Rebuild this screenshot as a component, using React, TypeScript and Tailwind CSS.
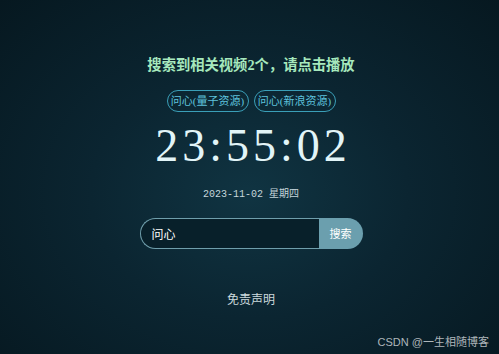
export default function App() {
    return (
        <div className="relative h-[354px] w-[499px] overflow-hidden bg-[radial-gradient(ellipse_at_50%_55%,#103442_0%,#0b2531_45%,#061820_100%)]">
            <div className="flex flex-col items-center pt-[55px] pl-[3px]">
                {/* 标题 */}
                <h1 className="font-['Liberation_Serif','Noto_Sans_CJK_SC',serif] text-[14.3px] font-bold leading-[20px] text-[#a6e8bd]">
                    搜索到相关视频2个，请点击播放
                </h1>

                {/* 资源按钮 */}
                <div className="mt-[15px] flex gap-[5px]">
                    {['问心(量子资源)', '问心(新浪资源)'].map((t) => (
                        <button
                            key={t}
                            className="h-[22px] w-[82px] rounded-full border-[1.5px] border-[#3a9fb8] font-['Liberation_Serif','Noto_Sans_CJK_SC',serif] text-[11px] leading-none text-[#5ec2dc]"
                        >
                            {t}
                        </button>
                    ))}
                </div>

                {/* 时钟 */}
                <div className="mt-[9px] pl-[4px] font-['Liberation_Serif',serif] text-[46px] leading-[50px] tracking-[4px] text-[#e2f5f8]">
                    23:55:02
                </div>

                {/* 日期 */}
                <div className="mt-[17px] font-['Liberation_Mono','Noto_Sans_CJK_SC',monospace] text-[10px] leading-[14px] text-[#c5d6db]">
                    2023-11-02 星期四
                </div>

                {/* 搜索框 */}
                <div className="mt-[16px] flex h-[31px] w-[223px] font-['Noto_Sans_CJK_SC',sans-serif]">
                    <div className="flex flex-1 items-center rounded-l-full border border-r-0 border-[#6f9eab] bg-[#08202a] pl-[11px] text-[12px] text-white">
                        问心
                    </div>
                    <button className="w-[44px] rounded-r-full bg-[#6b9fae] text-[11px] text-white">
                        搜索
                    </button>
                </div>

                {/* 免责声明 */}
                <div className="mt-[43px] font-['Liberation_Serif','Noto_Sans_CJK_SC',serif] text-[12px] leading-[16px] text-[#ccdadd]">
                    免责声明
                </div>
            </div>

            {/* 水印 */}
            <div className="absolute bottom-[4px] right-[10px] font-['Liberation_Sans','Noto_Sans_CJK_SC',sans-serif] text-[11px] text-[#aeb6ba]">
                CSDN @一生相随博客
            </div>
        </div>
    )
}
